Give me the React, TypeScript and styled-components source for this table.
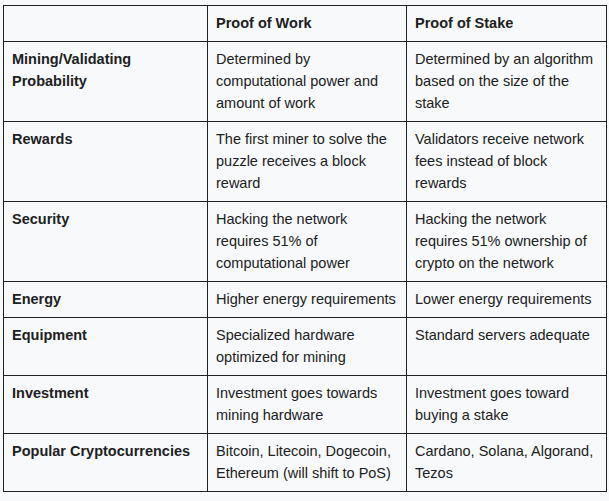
import styled, { createGlobalStyle } from "styled-components";

const GlobalStyle = createGlobalStyle`
  body {
    margin: 0;
    background: #f8f9fa;
    font-family: "Liberation Sans", Arial, sans-serif;
    color: #202122;
  }
`;

const Wrapper = styled.div`
  padding: 5px 3px;
`;

const Table = styled.table`
  border-collapse: collapse;
  width: 603px;
  table-layout: fixed;
  font-size: 14.5px;
  line-height: 22px;
  background: #f8f9fa;
`;

const Cell = styled.td<{ $bold?: boolean }>`
  border: 1px solid #202122;
  padding: 6px 8px 7px;
  vertical-align: top;
  text-align: left;
  font-weight: ${(p) => (p.$bold ? "bold" : "normal")};
`;

const HeadCell = styled.th`
  border: 1px solid #202122;
  padding: 6px 8px 7px;
  text-align: left;
  font-weight: bold;
`;

const rows = [
  [
    "Mining/Validating Probability",
    "Determined by computational power and amount of work",
    "Determined by an algorithm based on the size of the stake",
  ],
  [
    "Rewards",
    "The first miner to solve the puzzle receives a block reward",
    "Validators receive network fees instead of block rewards",
  ],
  [
    "Security",
    "Hacking the network requires 51% of computational power",
    "Hacking the network requires 51% ownership of crypto on the network",
  ],
  ["Energy", "Higher energy requirements", "Lower energy requirements"],
  [
    "Equipment",
    "Specialized hardware optimized for mining",
    "Standard servers adequate",
  ],
  [
    "Investment",
    "Investment goes towards mining hardware",
    "Investment goes toward buying a stake",
  ],
  [
    "Popular Cryptocurrencies",
    "Bitcoin, Litecoin, Dogecoin, Ethereum (will shift to PoS)",
    "Cardano, Solana, Algorand, Tezos",
  ],
];

function App() {
  return (
    <Wrapper>
      <GlobalStyle />
      <Table>
        <colgroup>
          <col style={{ width: 204 }} />
          <col style={{ width: 199 }} />
          <col style={{ width: 200 }} />
        </colgroup>
        <thead>
          <tr>
            <HeadCell></HeadCell>
            <HeadCell>Proof of Work</HeadCell>
            <HeadCell>Proof of Stake</HeadCell>
          </tr>
        </thead>
        <tbody>
          {rows.map((row, index) => (
            <tr key={index}>
              <Cell $bold>{row[0]}</Cell>
              <Cell>{row[1]}</Cell>
              <Cell>{row[2]}</Cell>
            </tr>
          ))}
        </tbody>
      </Table>
    </Wrapper>
  );
}

export default App;
